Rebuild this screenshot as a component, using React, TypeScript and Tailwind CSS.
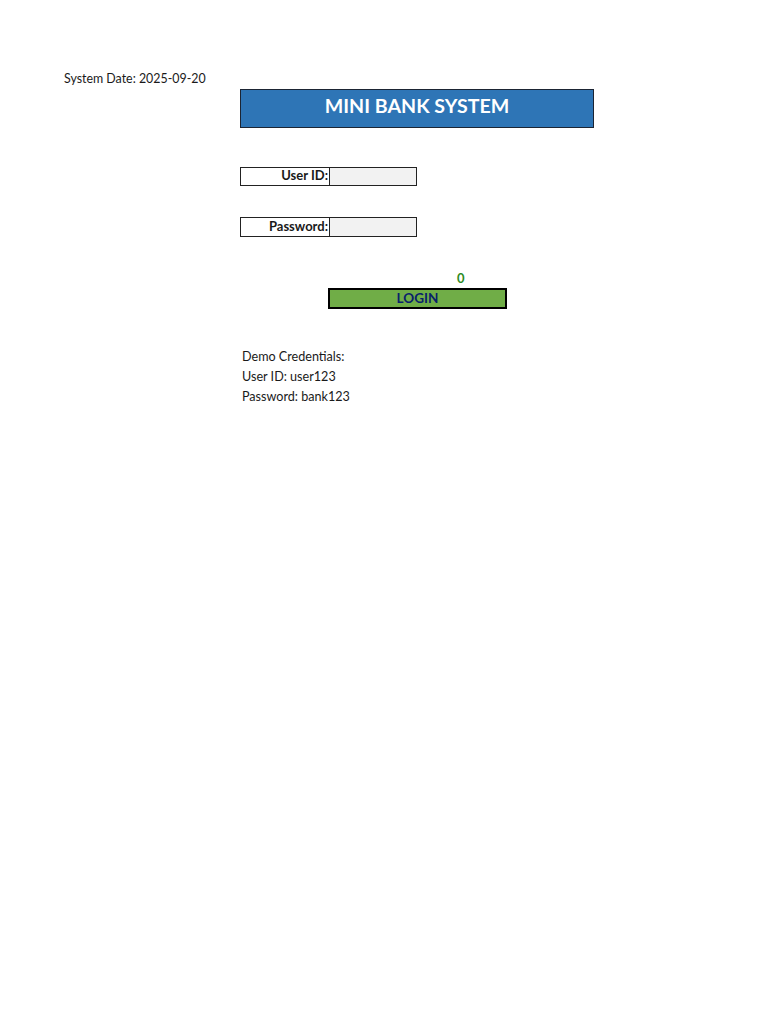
export default function App() {
  return (
    <div className="min-h-screen bg-white text-[#1a1a1a] font-['Lato','Noto_Sans',sans-serif]">
      <div className="pt-[69px]">
        {/* System date row */}
        <div className="h-[20px] pl-[64px] text-[12.4px] leading-[20px]">System Date: 2025-09-20</div>

        {/* Title banner */}
        <div className="ml-[240px] flex h-[39px] w-[354px] items-center justify-center border border-[#1b2433] bg-[#2e75b6] pb-[5px] text-[19.6px] font-bold text-white">
          MINI BANK SYSTEM
        </div>

        {/* User ID */}
        <div className="ml-[240px] mt-[39px] flex h-[19px] w-[177px] border border-[#222] text-[13px] font-bold">
          <div className="flex w-[88px] items-center justify-end pb-[2px] pr-[1px] leading-none">User ID:</div>
          <div className="flex-1 border-l border-[#222] bg-[#f2f2f2]" />
        </div>

        {/* Password */}
        <div className="ml-[240px] mt-[31px] flex h-[20px] w-[177px] border border-[#222] text-[13px] font-bold">
          <div className="flex w-[88px] items-center justify-end pb-[2px] pr-[1px] leading-none">Password:</div>
          <div className="flex-1 border-l border-[#222] bg-[#f2f2f2]" />
        </div>

        {/* Status */}
        <div className="mt-[31px] h-[20px] pl-[457px] text-[13px] font-bold leading-[20px] text-[#2e8b1e]">0</div>

        {/* Login button */}
        <div className="ml-[328px] flex h-[21px] w-[179px] items-center justify-center border-2 border-black bg-[#70ad47] pb-[1px] text-[13.5px] font-bold text-[#0a1f6b]">
          LOGIN
        </div>

        {/* Demo credentials */}
        <div className="mt-[38px] pl-[242px] text-[12.6px] leading-[20px]">
          <div>Demo Credentials:</div>
          <div>User ID: user123</div>
          <div>Password: bank123</div>
        </div>
      </div>
    </div>
  );
}
